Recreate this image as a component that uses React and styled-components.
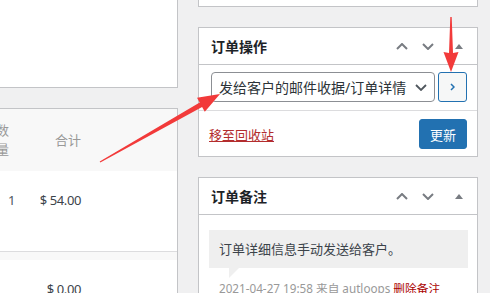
import React from 'react'
import styled, { createGlobalStyle } from 'styled-components'

const GlobalStyle = createGlobalStyle`
  body {
    margin: 0;
    background: #f0f0f1;
    font-family: "Noto Sans", "Noto Sans CJK SC", sans-serif;
    overflow: hidden;
  }
`

const Page = styled.div`
  position: relative;
  display: flex;
  gap: 20px;
  width: 490px;
  height: 293px;
  overflow: hidden;
`

const Column = styled.div`
  display: flex;
  flex-direction: column;
  gap: 20px;
  flex-shrink: 0;
  width: ${(p) => p.$width}px;
`

const Panel = styled.div`
  box-sizing: border-box;
  background: #fff;
  border: 1px solid #c3c4c7;
  ${(p) => p.$cutTop && 'border-top: none;'}
  ${(p) => p.$cutLeft && 'border-left: none;'}
  ${(p) => p.$cutBottom && 'border-bottom: none; flex: 1;'}
  ${(p) => p.$height && `height: ${p.$height}px; flex-shrink: 0;`}
  overflow: hidden;
`

/* order items (left) */
const ItemsHead = styled.div`
  display: flex;
  align-items: center;
  height: 62px;
  margin-left: -4px;
  background: #f8f8f8;
  color: #999;
  font-size: 13px;
  line-height: 19px;
`

const ItemsRow = styled.div`
  display: flex;
  box-sizing: border-box;
  height: ${(p) => p.$height}px;
  margin-left: -4px;
  padding-top: 20px;
  font-size: 13px;
  line-height: 19px;
  border-bottom: ${(p) => (p.$divider ? '1px solid #dcdcde' : 'none')};
`

const QtyCell = styled.div`
  width: 18px;
  box-sizing: border-box;
  padding-left: ${(p) => p.$pad || 0}px;
  color: #50575e;
  white-space: ${(p) => (p.$pad ? 'nowrap' : 'normal')};
`

const QtyHead = styled.div`
  width: 13px;
  margin-right: 5px;
`

const TotalCell = styled.div`
  width: 67px;
  text-align: right;
  color: ${(p) => (p.$head ? '#999' : '#3c434a')};
  letter-spacing: ${(p) => (p.$head ? 0 : -0.4)}px;
`

const Strip = styled.div`
  height: 8px;
  background: #f8f8f8;
`

/* postboxes (right) */
const BoxHeader = styled.div`
  display: flex;
  align-items: center;
  height: 36px;
  padding-left: 12px;
  border-bottom: 1px solid #c3c4c7;
`

const BoxTitle = styled.h2`
  margin: 0;
  font-size: 14px;
  font-weight: 700;
  color: #1d2327;
  flex: 1;
`

const HandleButton = styled.span`
  display: flex;
  align-items: center;
  justify-content: center;
  width: ${(p) => p.$width}px;
  height: 36px;
`

const SelectRow = styled.div`
  display: flex;
  gap: 3px;
  padding: 7px 10px 8px 12px;
`

const SelectBox = styled.div`
  box-sizing: border-box;
  display: flex;
  align-items: center;
  justify-content: space-between;
  width: 224px;
  height: 30px;
  padding: 0 7px 0 7px;
  border: 1px solid #8c8f94;
  border-radius: 4px;
  font-size: 14px;
  color: #2c3338;
  white-space: nowrap;
`

const GoButton = styled.button`
  box-sizing: border-box;
  display: flex;
  align-items: center;
  justify-content: center;
  width: 29px;
  height: 30px;
  padding: 0;
  border: 1px solid #2271b1;
  border-radius: 3px;
  background: #f6f7f7;
`

const ActionsRow = styled.div`
  display: flex;
  align-items: center;
  justify-content: space-between;
  padding: 8px 10px 7px 10px;
  border-top: 1px solid #dcdcde;
`

const TrashLink = styled.a`
  font-size: 13px;
  color: #b32d2e;
  text-decoration: underline;
`

const PrimaryButton = styled.button`
  box-sizing: border-box;
  height: 30px;
  padding: 0 10px;
  border: 1px solid #2271b1;
  border-radius: 3px;
  background: #2271b1;
  color: #fff;
  font-family: inherit;
  font-size: 13px;
`

const NotesBody = styled.div`
  padding: 15px 9px 0 10px;
`

const NoteBubble = styled.div`
  position: relative;
  padding: 10px;
  background: #efefef;
  font-size: 13px;
  line-height: 18px;
  color: #3c434a;

  &::after {
    content: '';
    position: absolute;
    bottom: -10px;
    left: 20px;
    width: 0;
    height: 0;
    border-style: solid;
    border-width: 10px 10px 0 0;
    border-color: #efefef transparent;
  }
`

const NoteMeta = styled.div`
  padding: 11px 10px 0;
  font-size: 11.7px;
  line-height: 18px;
  color: #999;
  white-space: nowrap;
`

const DeleteLink = styled.a`
  color: #a00;
`

const Overlay = styled.svg`
  position: absolute;
  left: 0;
  top: 0;
  pointer-events: none;
`

const Chevron = ({ dir }) => (
  <svg width="12" height="7" viewBox="0 0 12 7">
    <polyline
      points={dir === 'up' ? '1,6 6,1 11,6' : '1,1 6,6 11,1'}
      fill="none"
      stroke="#787c82"
      strokeWidth="2"
    />
  </svg>
)

const PanelHeader = ({ title }) => (
  <BoxHeader>
    <BoxTitle>{title}</BoxTitle>
    <HandleButton $width={26}>
      <Chevron dir="up" />
    </HandleButton>
    <HandleButton $width={26}>
      <Chevron dir="down" />
    </HandleButton>
    <HandleButton $width={36}>
      <svg width="8" height="5" viewBox="0 0 8 5">
        <polygon points="0,5 4,0 8,5" fill="#787c82" />
      </svg>
    </HandleButton>
  </BoxHeader>
)

export default function App() {
  return (
    <>
      <GlobalStyle />
      <Page>
        <Column $width={178}>
          <Panel $cutTop $cutLeft $height={88} />
          <Panel $cutLeft $cutBottom>
            <ItemsHead>
              <QtyHead>数量</QtyHead>
              <TotalCell $head>合计</TotalCell>
            </ItemsHead>
            <ItemsRow $height={81} $divider>
              <QtyCell $pad={12}>1</QtyCell>
              <TotalCell>$ 54.00</TotalCell>
            </ItemsRow>
            <Strip />
            <ItemsRow $height={60}>
              <QtyCell />
              <TotalCell>$ 0.00</TotalCell>
            </ItemsRow>
          </Panel>
        </Column>

        <Column $width={280}>
          <Panel $cutTop $height={7} />
          <Panel>
            <PanelHeader title="订单操作" />
            <SelectRow>
              <SelectBox>
                <span>发给客户的邮件收据/订单详情</span>
                <svg width="12" height="7" viewBox="0 0 12 7">
                  <polyline points="1,1 6,6 11,1" fill="none" stroke="#50575e" strokeWidth="1.8" />
                </svg>
              </SelectBox>
              <GoButton>
                <svg width="5" height="8" viewBox="0 0 5 8">
                  <polyline points="1,1 4,4 1,7" fill="none" stroke="#2271b1" strokeWidth="1.5" />
                </svg>
              </GoButton>
            </SelectRow>
            <ActionsRow>
              <TrashLink>移至回收站</TrashLink>
              <PrimaryButton>更新</PrimaryButton>
            </ActionsRow>
          </Panel>
          <Panel $cutBottom>
            <PanelHeader title="订单备注" />
            <NotesBody>
              <NoteBubble>订单详细信息手动发送给客户。</NoteBubble>
              <NoteMeta>
                2021-04-27 19:58 来自 autloops <DeleteLink>删除备注</DeleteLink>
              </NoteMeta>
            </NotesBody>
          </Panel>
        </Column>

        <Overlay width="490" height="293" viewBox="0 0 490 293">
          <polygon
            points="99.7,161.6 199.7,102.6 197,97.8 220,94 204.8,111.8 202.1,107 100.3,162.4"
            fill="#f23a3a"
          />
          <polygon
            points="450.3,17 449,53 443.5,52 451,72 458.5,52 453,53 451.7,17"
            fill="#f23a3a"
          />
        </Overlay>
      </Page>
    </>
  )
}
